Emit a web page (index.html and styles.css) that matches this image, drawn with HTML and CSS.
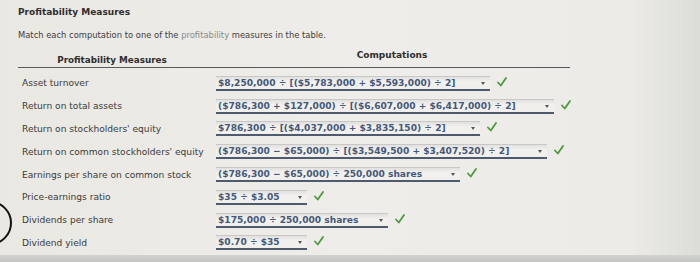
FILE: index.html
```html
<!DOCTYPE html>
<html>
<head>
<meta charset="utf-8">
<link rel="stylesheet" href="styles.css">
</head>
<body>
<div class="page">
  <h1 class="title">Profitability Measures</h1>
  <p class="intro">Match each computation to one of the <span class="muted">profitability</span> measures in the table.</p>
  <div class="table">
    <div class="head">
      <div class="h1">Profitability Measures</div>
      <div class="h2">Computations</div>
    </div>
    <div class="rows">
    <div class="row"><div class="label">Asset turnover</div><div class="cell"><span class="sel w1">$8,250,000 ÷ [($5,783,000 + $5,593,000) ÷ 2]<i class="arr"></i></span><svg class="ok" width="10" height="10" viewBox="0 0 10 10"><polyline points="1,5.5 3.8,8.5 9,1" /></svg></div></div>
    <div class="row"><div class="label">Return on total assets</div><div class="cell"><span class="sel w2">($786,300 + $127,000) ÷ [($6,607,000 + $6,417,000) ÷ 2]<i class="arr"></i></span><svg class="ok" width="10" height="10" viewBox="0 0 10 10"><polyline points="1,5.5 3.8,8.5 9,1" /></svg></div></div>
    <div class="row"><div class="label">Return on stockholders' equity</div><div class="cell"><span class="sel w3">$786,300 ÷ [($4,037,000 + $3,835,150) ÷ 2]<i class="arr"></i></span><svg class="ok" width="10" height="10" viewBox="0 0 10 10"><polyline points="1,5.5 3.8,8.5 9,1" /></svg></div></div>
    <div class="row"><div class="label">Return on common stockholders' equity</div><div class="cell"><span class="sel w4">($786,300 − $65,000) ÷ [($3,549,500 + $3,407,520) ÷ 2]<i class="arr"></i></span><svg class="ok" width="10" height="10" viewBox="0 0 10 10"><polyline points="1,5.5 3.8,8.5 9,1" /></svg></div></div>
    <div class="row"><div class="label">Earnings per share on common stock</div><div class="cell"><span class="sel w5">($786,300 − $65,000) ÷ 250,000 shares<i class="arr"></i></span><svg class="ok" width="10" height="10" viewBox="0 0 10 10"><polyline points="1,5.5 3.8,8.5 9,1" /></svg></div></div>
    <div class="row"><div class="label">Price-earnings ratio</div><div class="cell"><span class="sel w6">$35 ÷ $3.05<i class="arr"></i></span><svg class="ok" width="10" height="10" viewBox="0 0 10 10"><polyline points="1,5.5 3.8,8.5 9,1" /></svg></div></div>
    <div class="row"><div class="label">Dividends per share</div><div class="cell"><span class="sel w7">$175,000 ÷ 250,000 shares<i class="arr"></i></span><svg class="ok" width="10" height="10" viewBox="0 0 10 10"><polyline points="1,5.5 3.8,8.5 9,1" /></svg></div></div>
    <div class="row"><div class="label">Dividend yield</div><div class="cell"><span class="sel w6">$0.70 ÷ $35<i class="arr"></i></span><svg class="ok" width="10" height="10" viewBox="0 0 10 10"><polyline points="1,5.5 3.8,8.5 9,1" /></svg></div></div>
    </div>
  </div>
  <div class="bottom"></div>
  <svg class="ring" width="14" height="50" viewBox="0 0 14 50"><circle cx="-10" cy="25" r="21" fill="none" stroke="#111" stroke-width="2"/></svg>
</div>
</body>
</html>
```
FILE: styles.css
```css
html, body { margin: 0; padding: 0; }
body {
  width: 700px; height: 262px; overflow: hidden;
  font-family: "DejaVu Sans", Verdana, sans-serif;
  color: #3a3a3a;
  background: linear-gradient(90deg, #eae8e3 0%, #eeede9 50%, #ecebe7 90%, #dcdcd9 100%);
}
.page { position: relative; height: 262px; padding: 5px 0 0 18px; box-sizing: border-box; }
.title { margin: 0; font-size: 9px; font-weight: bold; color: #2e2e2e; line-height: 14px; }
.intro { margin: 9px 0 0; font-size: 8.4px; line-height: 14px; color: #3c3c3c; }
.muted { color: #8a8a88; }
.table { width: 552px; margin-top: 3px; }
.head { display: flex; align-items: flex-end; height: 22px; border-bottom: 1.5px solid #5a5a5a; }
.h1 { width: 188px; text-align: center; font-weight: bold; font-size: 8.8px; padding-bottom: 2px; color: #2e2e2e; }
.h2 { flex: 1; text-align: center; font-weight: bold; font-size: 9px; padding-bottom: 7px; padding-left: 8px; color: #2e2e2e; }
.rows { padding-top: 4px; }
.row { display: flex; align-items: center; height: 22.8px; width: 600px; }
.label { flex: 0 0 198px; padding-left: 4px; font-size: 9.1px; color: #3a3a3a; box-sizing: border-box; white-space: nowrap; }
.cell { display: flex; align-items: center; flex: 0 0 auto; }
.sel {
  position: relative; display: inline-block; box-sizing: border-box; flex: 0 0 auto;
  height: 15px; line-height: 13px; padding-left: 2px;
  font-size: 9.1px; font-weight: bold; color: #44587a; white-space: nowrap;
  background: linear-gradient(#e0e0de, #f2f1ee 40%, #f0efec);
  border-top: 1px solid #c8c8c6; border-bottom: 2px solid #4e5a6e;
}
.arr { position: absolute; right: 5px; top: 5px; width: 0; height: 0;
  border-left: 2.5px solid transparent; border-right: 2.5px solid transparent; border-top: 3px solid #555; }
.w1 { width: 274px; } .w2 { width: 338px; } .w3 { width: 264px; } .w4 { width: 331px; }
.w5 { width: 244px; } .w6 { width: 91px; } .w7 { width: 172px; }
.ok { margin-left: 7px; margin-top: -3px; fill: none; stroke: #4e9a3e; stroke-width: 1.8; stroke-linecap: round; stroke-linejoin: round; }
.bottom { position: absolute; left: 0; right: 0; bottom: 0; height: 7px; background: linear-gradient(#d2d3d1, #c4c6c4); }
.ring { position: absolute; left: 0; top: 198px; }
```
